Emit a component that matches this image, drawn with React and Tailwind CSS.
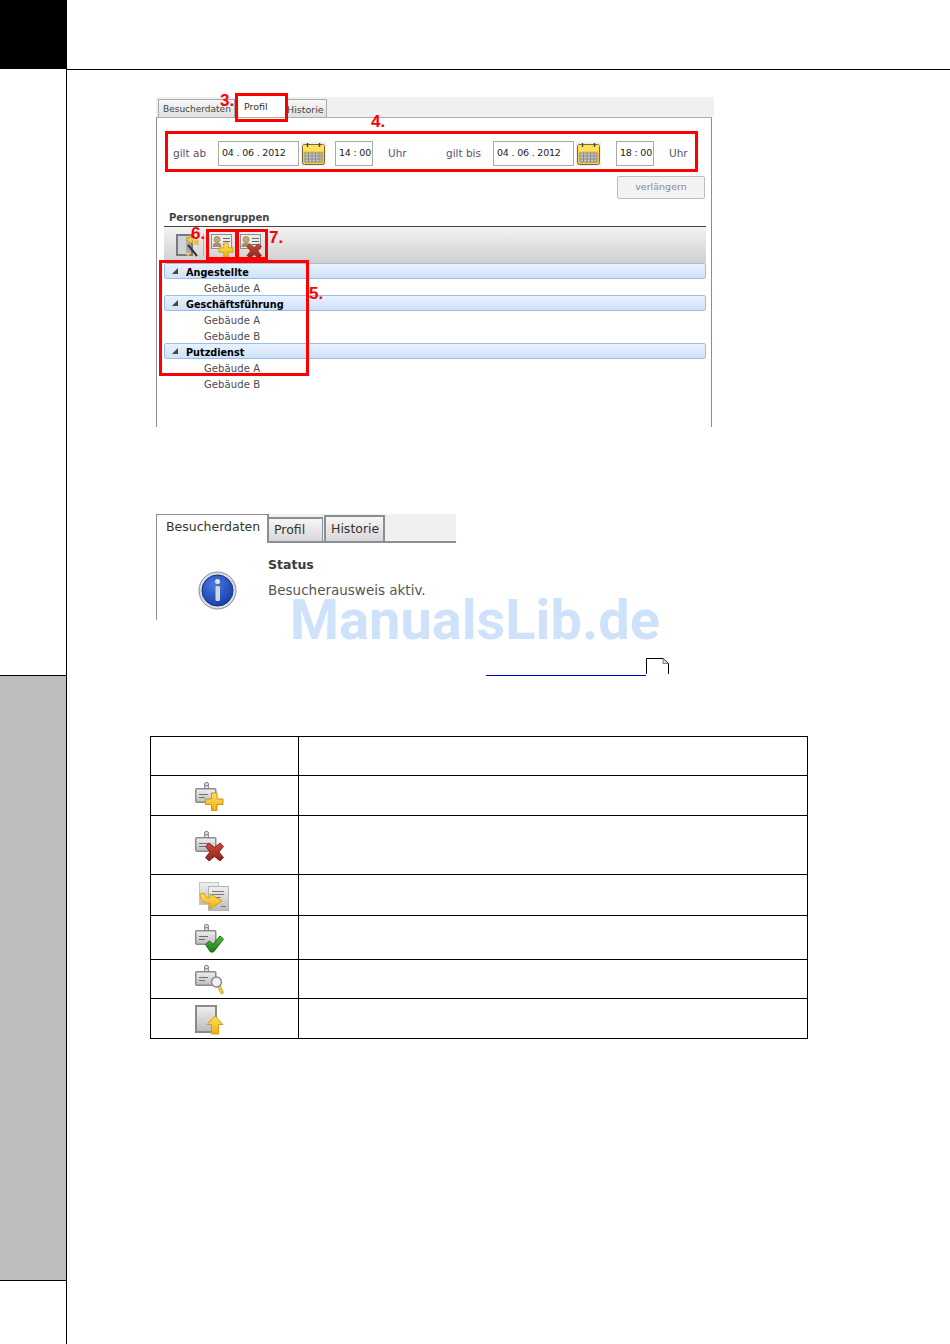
import React from "react";

const ui = { fontFamily: '"DejaVu Sans", sans-serif' };

function Defs() {
  return (
    <svg width="0" height="0" className="absolute">
      <defs>
        <linearGradient id="card" x1="0" y1="0" x2="0" y2="1"><stop offset="0" stopColor="#f0f0f0" /><stop offset="1" stopColor="#bcbcbc" /></linearGradient>
        <linearGradient id="yel" x1="0" y1="0" x2="0" y2="1"><stop offset="0" stopColor="#ffe05a" /><stop offset="1" stopColor="#f0b010" /></linearGradient>
        <linearGradient id="red" x1="0" y1="0" x2="0" y2="1"><stop offset="0" stopColor="#cf4a3c" /><stop offset="1" stopColor="#8e2418" /></linearGradient>
        <linearGradient id="grn" x1="0" y1="0" x2="0" y2="1"><stop offset="0" stopColor="#5cb83c" /><stop offset="1" stopColor="#14801a" /></linearGradient>
        <radialGradient id="blu" cx="0.4" cy="0.3" r="0.8"><stop offset="0" stopColor="#4a7ae0" /><stop offset="1" stopColor="#1238a4" /></radialGradient>
      </defs>
    </svg>
  );
}

function Badge() {
  return (
    <g>
      <rect x="9.500" y="0.500" width="4" height="4" rx="1.500" fill="#ddd" stroke="#888" />
      <rect x="9.500" y="3.500" width="4" height="4" rx="1.500" fill="#ddd" stroke="#888" />
      <rect x="0.750" y="6.750" width="20" height="13.500" rx="1" fill="url(#card)" stroke="#8c8c8c" strokeWidth="1.500" />
      <path d="M4 12.500h9M4 15.500h6" stroke="#707070" />
    </g>
  );
}
const Plus = ({ t = "" }) => (
  <path transform={t} d="M16.500 11h5.500v6h6v5.500h-6v6h-5.500v-6h-6v-5.500h6z" fill="url(#yel)" stroke="#c8930e" strokeLinejoin="round" />
);
const Cross = ({ t = "" }) => (
  <path transform={t} d="M14 12l5.500 4.500 5.500-4.500 3.500 3.500-4.500 5.500 4.500 5.500-3.500 3.500-5.500-4.500-5.500 4.500-3.500-3.500 4.500-5.500-4.500-5.500z" fill="url(#red)" stroke="#7d2a20" strokeLinejoin="round" />
);

const Ico = ({ children }) => <svg width="30" height="30" viewBox="0 0 30 30">{children}</svg>;

const IconAdd = () => <Ico><Badge /><Plus /></Ico>;
const IconDel = () => <Ico><Badge /><Cross /></Ico>;
const IconCopy = () => (
  <svg width="32" height="30" viewBox="0 0 32 30">
    <rect x="0.500" y="1.500" width="19" height="22" fill="url(#card)" stroke="#c4c4c4" />
    <rect x="9.500" y="5.500" width="20" height="24" fill="url(#card)" stroke="#b4b4b4" />
    <path d="M13 10.500h12M13 13.500h12M13 16.500h9M22 25.500h5" stroke="#777" />
    <path d="M1 13c0 6 3 9 10 9.500v5.500l12-8-12-7v4c-3 0-5-1-5.500-4.500z" fill="url(#yel)" stroke="#d29f17" strokeLinejoin="round" />
  </svg>
);
const IconCheck = () => (
  <Ico><Badge /><path d="M10.500 20.500l4-3.500 3.500 3.500 7-8.500 3.500 3-10 13-3 0z" fill="url(#grn)" stroke="#176f17" strokeLinejoin="round" /></Ico>
);
const IconSearch = () => (
  <Ico>
    <Badge />
    <path d="M24 21.500l3 6" stroke="#c8930e" strokeWidth="3.400" strokeLinecap="round" />
    <path d="M24 21.500l3 6" stroke="#f6cd55" strokeWidth="1.800" strokeLinecap="round" />
    <circle cx="21.500" cy="17" r="5" fill="#eef0f2" stroke="#8a8a8a" strokeWidth="1.500" />
  </Ico>
);
const IconUp = () => (
  <svg width="30" height="30" viewBox="0 0 30 30">
    <rect x="1" y="1" width="20" height="26" fill="url(#card)" stroke="#8a8a8a" strokeWidth="2" />
    <path d="M20 11l8 8.500h-4.500v9.500h-7v-9.500h-4.500z" fill="url(#yel)" stroke="#d29f17" strokeLinejoin="round" />
  </svg>
);

const Calendar = () => (
  <svg width="25" height="24" viewBox="0 0 25 24">
    <rect width="25" height="24" fill="#eeeeee" />
    <rect x="1.500" y="2.500" width="22" height="20" rx="2" fill="#f3cf43" stroke="#77673a" />
    <rect x="2" y="3" width="21" height="6" fill="#ffe25c" />
    <rect x="4" y="11" width="17" height="9" fill="#c9c9c9" stroke="#8a8a8a" />
    <path d="M7.500 11v9M11 11v9M14.500 11v9M18 11v9M4 14h17M4 17h17" stroke="#8a8a8a" />
    <path d="M6.500 1v4M18.500 1v4" stroke="#444" strokeWidth="1.400" />
  </svg>
);

const Wizard = () => (
  <svg width="23" height="24" viewBox="0 0 23 24">
    <rect x="1" y="2" width="15" height="20" fill="#d0d3d6" stroke="#77797c" strokeWidth="2" />
    <rect x="10" y="4" width="5" height="16" fill="#a9acae" />
    <path d="M12 12l9 11" stroke="#333" strokeWidth="2" />
    <path d="M14 2l1.500 3 3 .5-2 2 .5 3-3-1.500-2.500 1.500.5-3-2-2 3-.5z" fill="#f5c93f" stroke="#c8930e" strokeWidth=".5" />
    <path d="M20.500 6l1 2 2 .3-1.500 1.500.3 2-1.800-1-1.800 1 .3-2-1.500-1.500 2-.3z" fill="#f5c93f" stroke="#c8930e" strokeWidth=".5" />
    <circle cx="12" cy="21" r="1.800" fill="#f5c93f" />
  </svg>
);

const Person = ({ children }) => (
  <svg width="23" height="24" viewBox="0 0 23 24" className="overflow-visible">
    <rect x="0.500" y="1.500" width="20" height="14" fill="#ebebeb" stroke="#8f8f8f" />
    <circle cx="6" cy="6.500" r="3" fill="#c8a878" stroke="#7d6a50" strokeWidth=".6" />
    <path d="M1.500 14c0-3.500 2-4.500 4.500-4.500s4.500 1 4.500 4.500z" fill="#a98f68" />
    <path d="M12 5.500h7M12 8.500h7M12 11.500h5" stroke="#666" />
    {children}
  </svg>
);

const Input = ({ children, w }) => (
  <div className={`${w} h-[25px] border border-[#a9a9a9] bg-white flex items-center pl-[3px] text-[9.500px] tracking-[-0.2px] text-[#222] whitespace-pre shrink-0`}>
    {children}
  </div>
);

const Label = ({ children, className = "" }) => (
  <div className={`text-[10.500px] text-[#5d5170] shrink-0 ${className}`}>{children}</div>
);

const Group = ({ children }) => (
  <div className="h-[16px] border border-[#9cbde6] rounded-[2px] bg-gradient-to-b from-[#e8f2fd] to-[#cfe2f8] flex items-center pl-[7px] text-[9.700px] font-bold text-black">
    <span className="w-0 h-0 border-l-[6px] border-l-transparent border-b-[6px] border-b-[#444]" />
    <span className="ml-[8px] mt-[3px] leading-none">{children}</span>
  </div>
);
const Item = ({ children }) => (
  <div className="h-[16px] pl-[40px] text-[10px] leading-[19px] text-[#4a4a55] tracking-[0.1px]">{children}</div>
);

const RedBox = ({ className }) => <div className={`absolute border-[3px] border-[#ff0000] ${className}`} />;
const RedNum = ({ className, children }) => (
  <div className={`absolute text-[#ff0000] font-bold text-[17px] leading-none ${className}`} style={{ fontFamily: '"Liberation Sans", sans-serif' }}>{children}</div>
);

function Shot1() {
  return (
    <section className="relative w-[558px] h-[330px] ml-[89px] mt-[27px] flex flex-col" style={ui}>
      <div className="h-[20px] bg-[#f0f0f0] flex items-end pl-[2px]">
        <div className="w-[77px] h-[18px] border border-b-0 border-[#aaa] bg-gradient-to-b from-[#f8f8f8] to-[#e0e0e0] text-[9px] pl-[4px] leading-[19px] text-[#444] whitespace-nowrap overflow-hidden">Besucherdaten</div>
        <div className="w-[50px] h-[20px] bg-white text-[9.500px] pl-[9px] pt-[1px] leading-[18px] text-[#333]">Profil</div>
        <div className="w-[42px] h-[18px] border border-b-0 border-[#aaa] bg-gradient-to-b from-[#f8f8f8] to-[#e0e0e0] text-[9.500px] pl-[1px] leading-[19px] text-[#444]">Historie</div>
      </div>
      <div className="w-[556px] flex-1 border-t border-x border-t-[#aeaeae] border-x-[#8d8d95] flex flex-col">
        <div className="flex items-center h-[25px] mt-[23px] pl-[16px]">
          <Label className="w-[45px]">gilt ab</Label>
          <Input w="w-[81px]">{"04 . 06 . 2012"}</Input>
          <div className="ml-[2px]"><Calendar /></div>
          <div className="ml-[9px]"><Input w="w-[38px]">{"14 : 00"}</Input></div>
          <Label className="w-[58px] ml-[15px]">Uhr</Label>
          <Label className="w-[47px]">gilt bis</Label>
          <Input w="w-[81px]">{"04 . 06 . 2012"}</Input>
          <div className="ml-[2px]"><Calendar /></div>
          <div className="ml-[15px]"><Input w="w-[38px]">{"18 : 00"}</Input></div>
          <Label className="ml-[15px]">Uhr</Label>
        </div>
        <div className="self-end mr-[6px] mt-[10px] w-[88px] h-[23px] border border-[#bdbdbd] rounded-[2px] bg-[#f2f2f2] flex items-center justify-center text-[9.500px] text-[#8a8a8a]">verlängern</div>
        <div className="ml-[7px] w-[542px]">
          <div className="h-[28px] border-b border-[#444] pl-[5px] pt-[12px] text-[10px] leading-[14px] font-bold text-[#444]">Personengruppen</div>
          <div className="h-[36px] bg-gradient-to-b from-[#f3f3f3] to-[#cfcfcf] flex items-center pl-[12px]">
            <Wizard />
            <div className="w-px h-[22px] bg-[#b5b5b5] ml-[4px]" />
            <div className="ml-[7px]"><Person><Plus t="translate(-.4 1.200) scale(.8)" /></Person></div>
            <div className="ml-[6px]"><Person><Cross t="translate(-1.400 1.200) scale(.8)" /></Person></div>
          </div>
          <Group>Angestellte</Group>
          <Item>Gebäude A</Item>
          <Group>Geschäftsführung</Group>
          <Item>Gebäude A</Item>
          <Item>Gebäude B</Item>
          <Group>Putzdienst</Group>
          <Item>Gebäude A</Item>
          <Item>Gebäude B</Item>
        </div>
      </div>
      <RedBox className="left-[79px] top-[-4px] w-[53px] h-[29px]" />
      <RedBox className="left-[9px] top-[34px] w-[533px] h-[41px]" />
      <RedBox className="left-[50px] top-[132px] w-[32px] h-[31px]" />
      <RedBox className="left-[80px] top-[132px] w-[32px] h-[31px]" />
      <RedBox className="left-[3px] top-[163px] w-[150px] h-[116px]" />
      <RedNum className="left-[64px] top-[-5px]">3.</RedNum>
      <RedNum className="left-[215px] top-[16px]">4.</RedNum>
      <RedNum className="left-[35px] top-[128px]">6.</RedNum>
      <RedNum className="left-[113px] top-[132px]">7.</RedNum>
      <RedNum className="left-[153px] top-[188px]">5.</RedNum>
    </section>
  );
}

function Shot2() {
  return (
    <section className="relative w-[300px] h-[106px] ml-[89px] mt-[87px]" style={ui}>
      <div className="h-[29px] bg-[#f0f0f0] flex items-end border-b-2 border-[#8d8d95]">
        <div className="w-[113px] h-[29px] -mb-[2px] bg-white border-t border-r-2 border-l border-[#8d8d95] text-[12.500px] leading-[24px] pl-[9px] text-[#333]">Besucherdaten</div>
        <div className="w-[54px] h-[24px] border-t-2 border-r border-[#8d8d95] bg-gradient-to-b from-[#f6f6f6] to-[#d8d8d8] text-[12.500px] leading-[22px] pl-[5px] text-[#333]">Profil</div>
        <div className="ml-[1px] w-[61px] h-[26px] border-t-2 border-x-2 border-[#8d8d95] bg-gradient-to-b from-[#f6f6f6] to-[#d8d8d8] text-[12.500px] leading-[24px] pl-[5px] text-[#333]">Historie</div>
      </div>
      <div className="h-[77px] border-l border-[#8d8d95] flex">
        <div className="ml-[41px] mt-[28px]">
          <svg width="39" height="39" viewBox="0 0 39 39">
            <circle cx="19.500" cy="19.500" r="18.500" fill="#d9dbe0" stroke="#8b8f98" />
            <circle cx="19.500" cy="19.500" r="15.500" fill="url(#blu)" stroke="#0f2f86" />
            <rect x="17.500" y="15" width="4.500" height="15" rx="1.500" fill="#d8d8d8" />
            <circle cx="19.500" cy="10.500" r="2.500" fill="#e8e8e8" />
          </svg>
        </div>
        <div className="ml-[31px] mt-[13px]">
          <div className="text-[12.500px] font-bold leading-[18px] text-[#3a3a3a]">Status</div>
          <div className="text-[13.500px] leading-[18px] mt-[7px] text-[#555] whitespace-nowrap">Besucherausweis aktiv.</div>
        </div>
      </div>
      <div className="absolute left-[134px] top-[77px] text-[56px] leading-[58px] font-bold text-[#cfe2fb] whitespace-nowrap" style={{ fontFamily: 'Roboto, sans-serif' }}>ManualsLib.de</div>
    </section>
  );
}

function Note() {
  return (
    <div className="ml-[419px] mt-[38px] h-[18px] flex items-start">
      <div className="w-[160px] h-px bg-[#0000c8] mt-[17px]" />
      <svg width="24" height="16" viewBox="0 0 24 16" className="block">
        <path d="M.5 16V.500H17l5.500 5V16" fill="none" stroke="#000" />
        <path d="M17 1v4.500h5" fill="#ddd" stroke="#333" strokeWidth=".6" />
      </svg>
    </div>
  );
}

const rows = [
  [39, null, 0],
  [40, IconAdd, 44],
  [59, IconDel, 44],
  [41, IconCopy, 48],
  [44, IconCheck, 44],
  [39, IconSearch, 44],
  [40, IconUp, 44],
];
const heights = { 39: "h-[39px]", 40: "h-[40px]", 59: "h-[59px]", 41: "h-[41px]", 44: "h-[44px]" };

function Table() {
  return (
    <div className="ml-[83px] mt-[60px] w-[658px] border-t border-l border-black">
      {rows.map(([h, Icon, pad], i) => (
        <div key={i} className={`grid grid-cols-[148px_1fr] ${heights[h]} border-b border-black`}>
          <div className={`border-r border-black flex items-center pt-[2px] ${pad === 48 ? "pl-[48px]" : "pl-[44px]"}`}>
            {Icon && <Icon />}
          </div>
          <div className="border-r border-black" />
        </div>
      ))}
    </div>
  );
}

export default function App() {
  return (
    <div className="w-[950px] h-[1344px] bg-white flex overflow-hidden">
      <Defs />
      <aside className="w-[67px] h-full flex flex-col border-r border-black shrink-0">
        <div className="h-[69px] bg-black" />
        <div className="h-[606px]" />
        <div className="h-[606px] bg-[#bebebe] border-y border-black" />
      </aside>
      <main className="flex-1 flex flex-col">
        <div className="h-[70px] border-b border-black shrink-0" />
        <Shot1 />
        <Shot2 />
        <Note />
        <Table />
      </main>
    </div>
  );
}
